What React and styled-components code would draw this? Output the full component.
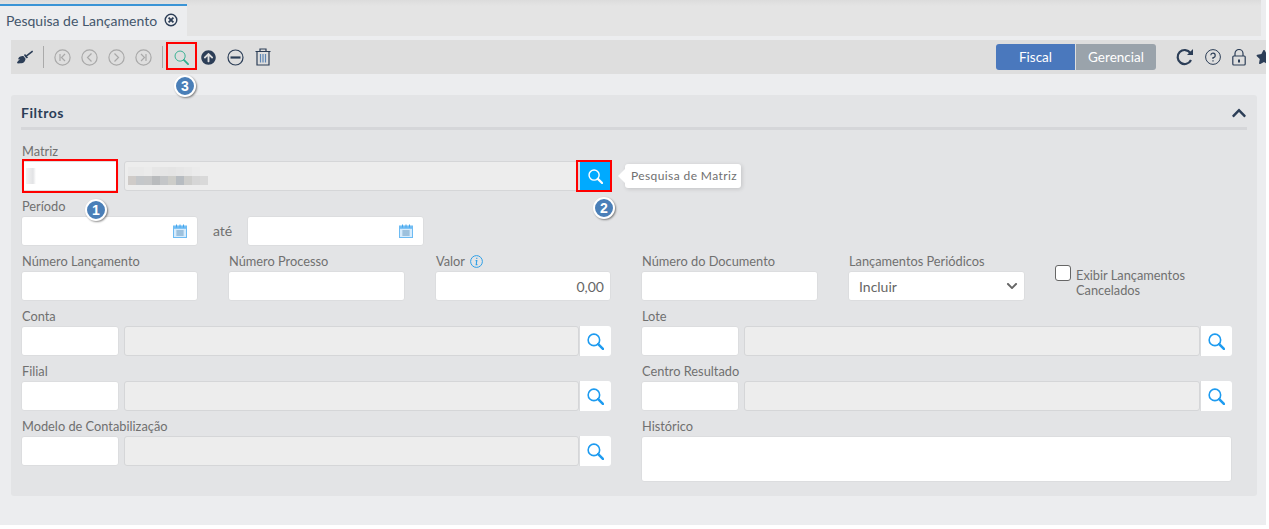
import styled, { createGlobalStyle } from "styled-components";
import { FaBroom, FaArrowCircleUp, FaStar, FaChevronUp, FaChevronDown } from "react-icons/fa";

const Global = createGlobalStyle`
  html, body { margin: 0; padding: 0; background: #fff; }
  body { font-family: Lato, "Open Sans", sans-serif; color: #707070; }
  * { box-sizing: border-box; }
`;

const Page = styled.div`
  position: relative;
  width: 1266px;
  height: 525px;
  background: #ecedef;
  overflow: hidden;
`;

const TabBar = styled.div`
  height: 36px;
  width: 1261px;
  padding-top: 4px;
  background: linear-gradient(#dcdcdc, #e4e4e4 6px);
  display: flex;
`;

const Tab = styled.div`
  width: 187px;
  background: #ecedef;
  border-top: 2px solid #3a94d6;
  display: flex;
  align-items: center;
  padding: 0 0 2px 6px;
  gap: 7px;
  font-size: 14px;
  color: #43566b;
`;

const Toolbar = styled.div`
  margin: 4px 0 0 11px;
  height: 34px;
  background: #dedede;
  display: flex;
  align-items: center;
  overflow: hidden;
`;

const Tool = styled.span`
  width: ${(p) => p.w || 27}px;
  height: 24px;
  flex: none;
  display: flex;
  align-items: center;
  justify-content: center;
  color: ${(p) => p.color || "#2c3e57"};
`;

const ClippedTool = styled(Tool)`
  margin-right: -11px;
`;

const Sep = styled.span`
  width: 1px;
  height: 22px;
  background: #aaa;
  margin: 0 5px;
  flex: none;
`;

const Spacer = styled.div`
  flex: 1;
`;

const Switch = styled.div`
  display: flex;
  height: 26px;
  border-radius: 3px;
  overflow: hidden;
  margin-right: 15px;
`;

const SwitchBtn = styled.div`
  width: ${(p) => p.w}px;
  background: ${(p) => (p.active ? "#4a78bd" : "#9aa3ab")};
  color: #fff;
  font-size: 13.5px;
  padding-bottom: 1px;
  display: flex;
  align-items: center;
  justify-content: center;
  margin-left: ${(p) => (p.active ? 0 : 1)}px;
`;

const Panel = styled.section`
  margin: 21px 9px 0 11px;
  height: 401px;
  background: #e3e4e6;
  border-radius: 3px;
  padding: 0 10px;
`;

const PanelHead = styled.div`
  height: 35px;
  border-bottom: 3px solid #d5d6d9;
  display: flex;
  align-items: center;
  justify-content: space-between;
  padding-top: 3px;
  color: #2c3e57;
  font-weight: 700;
  font-size: 14px;
  letter-spacing: 0.5px;
`;

const Rows = styled.div`
  display: grid;
  grid-template-columns: 590px 591px;
  column-gap: 30px;
  padding-top: 6px;
`;

const Col = styled.div`
  min-width: 0;
`;

const Field = styled.div`
  height: 55px;
`;

const Label = styled.div`
  height: 25px;
  line-height: 17px;
  padding: 6px 0 0 1px;
  font-size: 12.8px;
  white-space: nowrap;
  display: flex;
  align-items: center;
  gap: 5px;
`;

const Line = styled.div`
  display: flex;
  gap: ${(p) => p.gap ?? 5}px;
  align-items: flex-start;
`;

const Input = styled.div`
  width: ${(p) => p.w}px;
  height: ${(p) => p.h || 30}px;
  flex: ${(p) => (p.w ? "none" : 1)};
  background: ${(p) => (p.off ? "#ededed" : "#fff")};
  border: 1px solid ${(p) => (p.off ? "#d5d6d8" : "#dcdddf")};
  border-radius: 3px;
  display: flex;
  align-items: center;
  justify-content: ${(p) => (p.end ? "flex-end" : "flex-start")};
  padding: 0 ${(p) => p.pr || 6}px 0 10px;
  font-size: 14px;
  color: #666;
`;

const LookupBtn = styled.button`
  width: 32px;
  height: 30px;
  margin-left: -5px;
  flex: none;
  padding: 0;
  border: 0;
  border-left: 1px solid #dcdddf;
  border-radius: 0 3px 3px 0;
  background: ${(p) => (p.primary ? "#00aaff" : "#fff")};
  color: ${(p) => (p.primary ? "#fff" : "#1d9bf0")};
  display: flex;
  align-items: center;
  justify-content: center;
`;

const Ate = styled.span`
  width: 49px;
  height: 30px;
  flex: none;
  text-align: center;
  line-height: 30px;
  font-size: 14px;
`;

const Three = styled.div`
  display: grid;
  grid-template-columns: 177px 177px 176px;
  column-gap: 30px;
`;

const Two = styled.div`
  display: grid;
  grid-template-columns: 177px 1fr;
  column-gap: 30px;
`;

const Check = styled.label`
  display: flex;
  gap: 5px;
  padding-top: 19px;
  font-size: 12.8px;
  line-height: 15px;
`;

const CheckText = styled.span`
  margin-top: 3px;
`;

const Box = styled.span`
  width: 16px;
  height: 16px;
  flex: none;
  background: #fff;
  border: 1px solid #666;
  border-radius: 3px;
`;

const Mosaic = styled.div`
  display: grid;
  grid-template-columns: repeat(10, 8px);
  grid-auto-rows: 9px;
  margin-left: -7px;
`;

const Cell = styled.span`
  background: ${(p) => p.c};
`;

const Smudge = styled.span`
  width: 10px;
  height: 16px;
  margin-left: -6px;
  background: linear-gradient(90deg, #f4f4f4, #e2e3e5 70%, #fff);
`;

const Marker = styled.div`
  position: absolute;
  left: ${(p) => p.x}px;
  top: ${(p) => p.y}px;
  width: ${(p) => p.w}px;
  height: ${(p) => p.h}px;
  border: 2px solid #f00;
`;

const Badge = styled.div`
  position: absolute;
  left: ${(p) => p.x}px;
  top: ${(p) => p.y}px;
  width: 22px;
  height: 22px;
  border-radius: 50%;
  background: #4a7fb8;
  border: 2px solid #fff;
  box-shadow: 1px 1px 2px rgba(0, 0, 0, 0.45);
  color: #fff;
  font-family: "Liberation Sans", sans-serif;
  font-weight: 700;
  font-size: 14px;
  line-height: 18px;
  text-align: center;
`;

const Tooltip = styled.div`
  position: absolute;
  left: 625px;
  top: 164px;
  width: 116px;
  height: 24px;
  background: #fff;
  border-radius: 3px;
  box-shadow: 1px 1px 4px rgba(0, 0, 0, 0.15);
  font-size: 12px;
  letter-spacing: 0.4px;
  line-height: 23px;
  padding-left: 6px;
  white-space: nowrap;
  &::before {
    content: "";
    position: absolute;
    left: -7px;
    top: 5px;
    border-style: solid;
    border-width: 7px 7px 7px 0;
    border-color: transparent #fff transparent transparent;
  }
`;

const Search = ({ size = 16, stroke = 1.5 }) => (
  <svg width={size} height={size} viewBox="0 0 16 16" fill="none" stroke="currentColor">
    <circle cx="6.5" cy="6.5" r="5.4" strokeWidth={stroke} />
    <path d="M10.5 10.5 15 15" strokeWidth={stroke + 0.9} strokeLinecap="round" />
  </svg>
);

const Nav = ({ d }) => (
  <svg width="17" height="17" viewBox="0 0 17 17" fill="none" stroke="#a9a9a9" strokeWidth="1.2">
    <circle cx="8.5" cy="8.5" r="7.6" />
    <path d={d} />
  </svg>
);

const Cross = () => (
  <svg width="14" height="14" viewBox="0 0 14 14" fill="none" stroke="#2c3e57">
    <circle cx="7" cy="7" r="5.8" strokeWidth="1.4" />
    <path d="M4.6 4.6l4.8 4.8M9.4 4.6l-4.8 4.8" strokeWidth="1.8" />
  </svg>
);

const Minus = () => (
  <svg width="17" height="17" viewBox="0 0 17 17" fill="none" stroke="#2c3e57">
    <circle cx="8.5" cy="8.5" r="7.5" strokeWidth="1.2" />
    <path d="M3.5 8.5h10" strokeWidth="2.2" />
  </svg>
);

const Trash = () => (
  <svg width="16" height="18" viewBox="0 0 16 18" fill="none" stroke="#2c3e57" strokeWidth="1.2">
    <path d="M.5 3.500h15M5 3.300V1h6v2.300M2 3.500V17h12V3.500" />
    <path d="M5.500 6v8.500M8 6v8.500M10.500 6v8.500" stroke="#5d86b5" />
  </svg>
);

const Refresh = () => (
  <svg width="18" height="18" viewBox="0 0 18 18" fill="none" stroke="#2c3e57" strokeWidth="2.2">
    <path d="M15 12a7 7 0 1 1-.6-7" />
    <path d="M17 1v6h-6z" fill="#2c3e57" stroke="none" />
  </svg>
);

const Help = () => (
  <svg width="16" height="16" viewBox="0 0 16 16" fill="none" stroke="#2c3e57" strokeWidth="1">
    <circle cx="8" cy="8" r="7.4" />
    <path d="M5.800 6.200A2.200 2.200 0 1 1 8 8.600v1.400M8 11.200v1.400" strokeWidth="1.2" />
  </svg>
);

const Lock = () => (
  <svg width="14" height="17" viewBox="0 0 14 17" fill="none" stroke="#2c3e57" strokeWidth="1.2">
    <path d="M3 7V4.500a4 4 0 0 1 8 0V7" />
    <rect x=".8" y="7" width="12.4" height="9" rx="1" />
    <path d="M7 10.500v3" strokeWidth="2" />
  </svg>
);

const Calendar = () => (
  <svg width="14" height="14" viewBox="0 0 14 14" fill="none">
    <rect x=".5" y="2" width="13" height="11.5" fill="#d6ebfc" stroke="#6dbbf3" />
    <path d="M.5 2.200h13v2.600H.5z" fill="#6dbbf3" />
    <path d="M3.500 .5v3M7 .5v3M10.500 .5v3" stroke="#43a6ee" />
    <path d="M3 7h8M3 9h8M3 11h8M5 6v6M7 6v6M9 6v6" stroke="#7fa9cc" strokeWidth=".8" />
  </svg>
);

const Info = () => (
  <svg width="13" height="13" viewBox="0 0 13 13" fill="none" stroke="#2e9fe6">
    <circle cx="6.500" cy="6.500" r="5.900" />
    <path d="M6.800 2.800v1.200M5.600 5.600h1.200l-.6 4h1.200" strokeWidth="1.1" />
  </svg>
);

const blur = [
  "#e9e9e9", "#e9e9e9", "#ebebeb", "#e6e6e6", "#e5e5e5", "#e4e4e4", "#e6e6e6", "#e8e8e8", "#ebebeb", "#ededed",
  "#cfcbc8", "#c4c7ca", "#c6c7c8", "#b9bbbd", "#c4c6c8", "#cdcdc9", "#b7bcc1", "#cdcdcb", "#d6d6d6", "#d9d9d9",
];

const Lookup = ({ label }) => (
  <Field>
    <Label>{label}</Label>
    <Line>
      <Input w={98} />
      <Input off />
      <LookupBtn>
        <Search size={17} />
      </LookupBtn>
    </Line>
  </Field>
);

const App = () => (
  <Page>
    <Global />
    <TabBar>
      <Tab>
        Pesquisa de Lançamento
        <Cross />
      </Tab>
    </TabBar>
    <Toolbar>
      <Tool>
        <FaBroom size={16} />
      </Tool>
      <Sep />
      <Tool>
        <Nav d="M6 5v7M11 5 7.500 8.500 11 12" />
      </Tool>
      <Tool>
        <Nav d="M10.500 4.500 6.500 8.500l4 4" />
      </Tool>
      <Tool>
        <Nav d="M6.500 4.500l4 4-4 4" />
      </Tool>
      <Tool>
        <Nav d="M11 5v7M6 5l3.500 3.500L6 12" />
      </Tool>
      <Sep />
      <Tool color="#2fae8e">
        <Search size={15} stroke={1} />
      </Tool>
      <Tool>
        <FaArrowCircleUp size={15} />
      </Tool>
      <Tool>
        <Minus />
      </Tool>
      <Tool>
        <Trash />
      </Tool>
      <Spacer />
      <Switch>
        <SwitchBtn active w={79}>Fiscal</SwitchBtn>
        <SwitchBtn w={80}>Gerencial</SwitchBtn>
      </Switch>
      <Tool w={28}>
        <Refresh />
      </Tool>
      <Tool w={28}>
        <Help />
      </Tool>
      <Tool w={24}>
        <Lock />
      </Tool>
      <ClippedTool w={26}>
        <FaStar size={16} />
      </ClippedTool>
    </Toolbar>
    <Panel>
      <PanelHead>
        Filtros
        <FaChevronUp size={16} />
      </PanelHead>
      <Rows>
        <Col>
          <Field>
            <Label>Matriz</Label>
            <Line>
              <Input w={98}>
                <Smudge />
              </Input>
              <Input off>
                <Mosaic>
                  {blur.map((c, i) => (
                    <Cell key={i} c={c} />
                  ))}
                </Mosaic>
              </Input>
              <LookupBtn primary>
                <Search size={15} />
              </LookupBtn>
            </Line>
          </Field>
          <Field>
            <Label>Período</Label>
            <Line gap={0}>
              <Input w={177} end pr={10}>
                <Calendar />
              </Input>
              <Ate>até</Ate>
              <Input w={177} end pr={10}>
                <Calendar />
              </Input>
            </Line>
          </Field>
          <Three>
            <Field>
              <Label>Número Lançamento</Label>
              <Input w={177} />
            </Field>
            <Field>
              <Label>Número Processo</Label>
              <Input w={177} />
            </Field>
            <Field>
              <Label>
                Valor <Info />
              </Label>
              <Input w={176} end>
                0,00
              </Input>
            </Field>
          </Three>
          <Lookup label="Conta" />
          <Lookup label="Filial" />
          <Lookup label="Modelo de Contabilização" />
        </Col>
        <Col>
          <Field />
          <Field />
          <Two>
            <Field>
              <Label>Número do Documento</Label>
              <Input w={177} />
            </Field>
            <Line gap={30}>
              <Field>
                <Label>Lançamentos Periódicos</Label>
                <Input w={177}>
                  Incluir
                  <Spacer />
                  <FaChevronDown size={12} />
                </Input>
              </Field>
              <Check>
                <Box />
                <CheckText>
                  Exibir Lançamentos
                  <br />
                  Cancelados
                </CheckText>
              </Check>
            </Line>
          </Two>
          <Lookup label="Lote" />
          <Lookup label="Centro Resultado" />
          <Field>
            <Label>Histórico</Label>
            <Input h={46} />
          </Field>
        </Col>
      </Rows>
    </Panel>
    <Marker x={22} y={159} w={96} h={34} />
    <Marker x={576} y={160} w={36} h={32} />
    <Marker x={166} y={42} w={31} h={28} />
    <Badge x={85} y={199}>1</Badge>
    <Badge x={593} y={197}>2</Badge>
    <Badge x={174} y={75}>3</Badge>
    <Tooltip>Pesquisa de Matriz</Tooltip>
  </Page>
);

export default App;
